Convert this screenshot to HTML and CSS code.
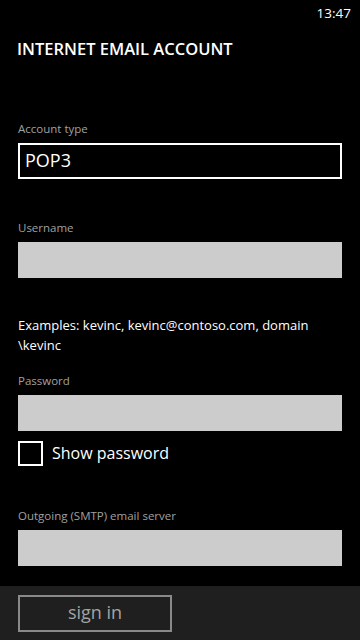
FILE: index.html
```html
<!DOCTYPE html>
<html lang="en">
<head>
  <meta charset="UTF-8" />
  <meta name="viewport" content="width=device-width, initial-scale=1.0" />
  <title>Internet Email Account</title>
  <link rel="stylesheet" href="styles.css">
</head>
<body>
  <!-- Status bar -->
  <div class="status-bar">
    <span class="clock">13:47</span>
  </div>

  <h1 class="page-title">INTERNET EMAIL ACCOUNT</h1>

  <div class="form">
    <div class="field field-account">
      <label class="field-label">Account type</label>
      <div class="picker">POP3</div>
    </div>

    <div class="field field-user">
      <label class="field-label">Username</label>
      <div class="textbox"></div>
    </div>

    <p class="hint">Examples: kevinc, kevinc@contoso.com, domain<wbr>\kevinc</p>

    <div class="field field-pass">
      <label class="field-label">Password</label>
      <div class="textbox"></div>
    </div>

    <div class="check-row">
      <span class="checkbox"></span>
      <span class="check-text">Show password</span>
    </div>

    <div class="field field-smtp">
      <label class="field-label">Outgoing (SMTP) email server</label>
      <div class="textbox"></div>
    </div>
  </div>

  <!-- Application bar -->
  <div class="app-bar">
    <button class="btn-sign">sign in</button>
  </div>
</body>
</html>
```

FILE: styles.css
```css
body {
  margin: 0;
  padding: 0;
  width: 360px;
  height: 640px;
  overflow: hidden;
  background: #000;
  color: #fff;
  font-family: 'Open Sans', 'Noto Sans', sans-serif;
}

.status-bar {
  height: 26px;
  display: flex;
  justify-content: flex-end;
  align-items: center;
  padding-right: 9px;
}

.clock {
  font-size: 13.5px;
  line-height: 20px;
}

.page-title {
  margin: 11px 0 0 17px;
  font-size: 16.5px;
  line-height: 24px;
  font-weight: 600;
}

.form {
  padding: 0 18px;
}

.field-label {
  display: block;
  font-size: 11.5px;
  line-height: 16px;
  color: #a0a0a0;
  margin-bottom: 6px;
}

.field-account {
  margin-top: 60px;
}

.picker {
  box-sizing: border-box;
  height: 36px;
  border: 2px solid #fff;
  padding: 0 5px;
  font-size: 18px;
  line-height: 31px;
}

.textbox {
  height: 36px;
  background: #cccccc;
}

.field-user {
  margin-top: 41px;
}

.hint {
  margin: 37px 0 0;
  font-size: 13px;
  line-height: 20px;
}

.field-pass {
  margin-top: 18px;
}

.check-row {
  display: flex;
  align-items: center;
  gap: 9px;
  margin-top: 10px;
}

.checkbox {
  box-sizing: border-box;
  width: 25px;
  height: 25px;
  border: 2px solid #fff;
}

.check-text {
  font-size: 16px;
  line-height: 25px;
}

.field-smtp {
  margin-top: 42px;
}

.app-bar {
  margin-top: 20px;
  height: 54px;
  background: #1f1f1f;
  padding: 9px 18px 0;
  box-sizing: border-box;
}

.btn-sign {
  box-sizing: border-box;
  width: 154px;
  height: 37px;
  background: transparent;
  border: 2px solid #8a8a8a;
  color: #a3a3a3;
  font-family: 'Open Sans', 'Noto Sans', sans-serif;
  font-size: 18px;
  padding: 0 0 3px;
  line-height: 26px;
}
```
